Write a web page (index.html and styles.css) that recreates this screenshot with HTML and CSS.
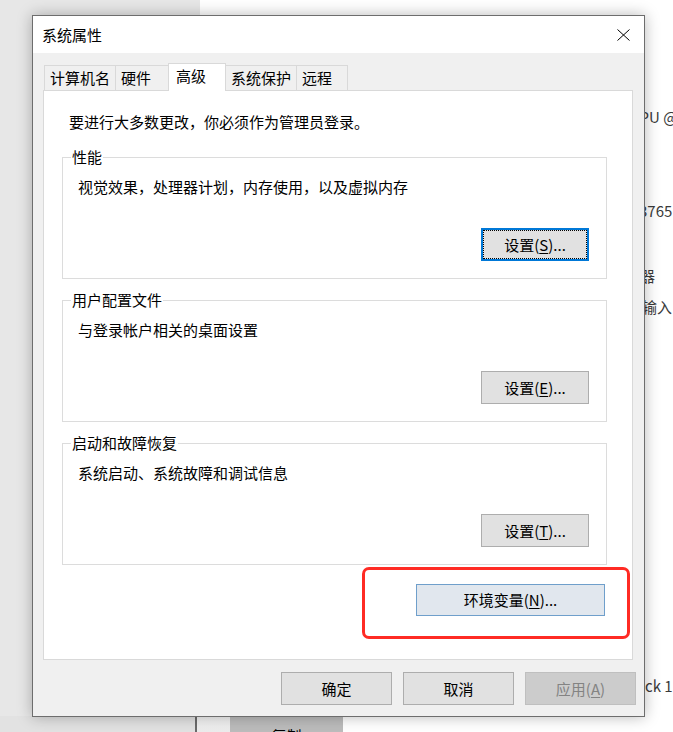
FILE: index.html
```html
<!DOCTYPE html>
<html lang="zh-CN">
<head>
<meta charset="utf-8">
<title>系统属性</title>
<link rel="stylesheet" href="styles.css">
</head>
<body>
<div class="bg-left"></div>
<div class="bg-text t-cpu">CPU @</div>
<div class="bg-text t-num">3765</div>
<div class="bg-text t-proc">处理器</div>
<div class="bg-text t-input">输入</div>
<div class="bg-text t-lock">ck 1</div>
<div class="bg-bottom">
  <div class="bb-gray"></div>
  <div class="bb-line"></div>
  <div class="bb-light"></div>
  <div class="bb-btn">复制</div>
</div>

<div class="dialog">
  <div class="titlebar">
    <span class="title">系统属性</span>
    <svg class="close" viewBox="0 0 13 12" width="13" height="12"><path d="M0.5 0.5 L12.5 11.5 M12.5 0.5 L0.5 11.5" stroke="#000" stroke-width="1" fill="none"/></svg>
  </div>
  <div class="dlg-body">
    <div class="tabs">
      <div class="tab">计算机名</div>
      <div class="tab">硬件</div>
      <div class="tab active">高级</div>
      <div class="tab after-active">系统保护</div>
      <div class="tab last">远程</div>
    </div>
    <div class="panel">
      <p class="note">要进行大多数更改，你必须作为管理员登录。</p>
      <fieldset class="group">
        <legend>性能</legend>
        <p class="desc">视觉效果，处理器计划，内存使用，以及虚拟内存</p>
        <div class="btn-row"><button class="btn focused">设置(<u>S</u>)...</button></div>
      </fieldset>
      <fieldset class="group">
        <legend>用户配置文件</legend>
        <p class="desc">与登录帐户相关的桌面设置</p>
        <div class="btn-row"><button class="btn">设置(<u>E</u>)...</button></div>
      </fieldset>
      <fieldset class="group">
        <legend>启动和故障恢复</legend>
        <p class="desc">系统启动、系统故障和调试信息</p>
        <div class="btn-row"><button class="btn">设置(<u>T</u>)...</button></div>
      </fieldset>
      <div class="env-row"><button class="btn env">环境变量(<u>N</u>)...</button></div>
      <div class="highlight"></div>
    </div>
    <div class="actions">
      <button class="btn act">确定</button>
      <button class="btn act">取消</button>
      <button class="btn act disabled">应用(<u>A</u>)</button>
    </div>
  </div>
</div>
</body>
</html>
```
FILE: styles.css
```css
* { box-sizing: border-box; }
html, body { margin: 0; padding: 0; }
body {
  width: 673px;
  height: 732px;
  overflow: hidden;
  position: relative;
  background: #ffffff;
  font-family: "Noto Sans CJK SC", "Noto Sans", sans-serif;
  font-size: 15px;
  color: #000;
}

/* background desktop windows */
.bg-left {
  position: absolute;
  left: 0; top: 0;
  width: 200px; height: 716px;
  background: #e7e7e7;
}
.bg-text {
  position: absolute;
  font-size: 15px;
  line-height: 20px;
  color: #3a3a3a;
  white-space: nowrap;
}
.t-cpu { left: 630px; top: 107px; }
.t-num { left: 639px; top: 201px; }
.t-proc { left: 610px; top: 266px; }
.t-input { left: 642px; top: 297px; }
.t-lock { left: 645px; top: 676px; }

.bg-bottom {
  position: absolute;
  left: 0; top: 716px;
  width: 673px; height: 16px;
  display: flex;
  overflow: hidden;
}
.bb-gray { width: 195px; background: #e2e2e2; }
.bb-line { width: 2px; background: #6b6b6b; }
.bb-light { width: 33px; background: linear-gradient(#f4f4f4, #ececec); }
.bb-btn {
  width: 113px;
  background: #bcbcbc;
  text-align: center;
  padding-top: 10px;
  line-height: 20px;
}

/* dialog window */
.dialog {
  position: absolute;
  left: 32px; top: 15px;
  width: 613px; height: 702px;
  border: 1px solid #6d6d6d;
  background: #f0f0f0;
  box-shadow: 0 0 14px rgba(0, 0, 0, 0.28);
  display: flex;
  flex-direction: column;
}
.titlebar {
  height: 37px;
  background: #fff;
  display: flex;
  align-items: center;
  justify-content: space-between;
  padding: 0 14px 0 9px;
}
.title { line-height: 20px; }
.close { display: block; }

.dlg-body {
  flex: 1;
  padding-top: 10px;
  display: flex;
  flex-direction: column;
}

/* tabs */
.tabs {
  display: flex;
  align-items: flex-end;
  height: 27px;
  margin-left: 11px;
}
.tab {
  height: 25px;
  min-width: 53px;
  border: 1px solid #d9d9d9;
  border-bottom: none;
  border-right: none;
  padding: 0 5px;
  line-height: 23px;
  background: #f0f0f0;
  white-space: nowrap;
}
.tab.active {
  height: 28px;
  width: 58px;
  padding-left: 7px;
  margin-bottom: -1px;
  border-right: 1px solid #d9d9d9;
  background: #fff;
  position: relative;
  z-index: 1;
}
.tab.after-active { border-left: none; }
.tab.last { border-right: 1px solid #d9d9d9; min-width: 52px; }

/* panel */
.panel {
  height: 570px;
  margin: 0 11px 0 10px;
  border: 1px solid #d9d9d9;
  background: #fff;
  padding-top: 21px;
  position: relative;
}
.note {
  margin: 0 0 0 25px;
  line-height: 20px;
}
.group {
  margin: 15px 25px 0 18px;
  padding: 10px 17px 17px 15px;
  border: 1px solid #dcdcdc;
  min-width: 0;
}
.group + .group { margin-top: 11px; }
.group legend {
  margin-left: -7px;
  padding: 0 1px;
  line-height: 20px;
}
.desc {
  margin: 0;
  line-height: 20px;
}
.btn-row {
  display: flex;
  justify-content: flex-end;
  margin-top: 31px;
}

.btn {
  font: inherit;
  width: 108px;
  height: 33px;
  padding: 0;
  background: #e1e1e1;
  border: 1px solid #adadad;
  color: #000;
  text-align: center;
  line-height: 20px;
}
.btn u { text-decoration-thickness: 1px; text-underline-offset: 2px; }
.btn.focused {
  border: 2px solid #0078d7;
  outline: 1px dotted #000;
  outline-offset: -3px;
}

.env-row {
  display: flex;
  justify-content: flex-end;
  margin: 19px 27px 0 0;
}
.btn.env {
  width: 189px;
  height: 32px;
  background: #e1e7ee;
  border-color: #6f9fcb;
}

.highlight {
  position: absolute;
  left: 318px; top: 476px;
  width: 268px; height: 72px;
  border: 3px solid #ff2b24;
  border-radius: 7px;
}

/* dialog buttons */
.actions {
  display: flex;
  justify-content: flex-end;
  gap: 11px;
  margin-top: 12px;
  padding-right: 8px;
}
.btn.act { width: 111px; height: 33px; }
.btn.disabled {
  background: #cccccc;
  border-color: #bfbfbf;
  color: #838383;
}
```
